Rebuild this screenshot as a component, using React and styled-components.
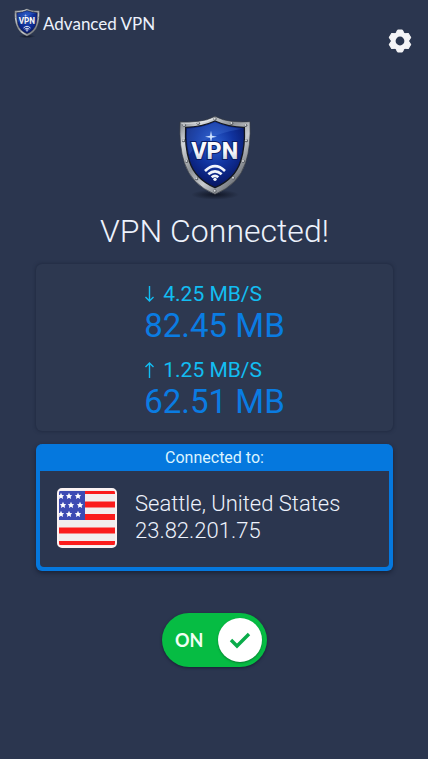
import React, { useId, useState } from "react";
import styled, { createGlobalStyle } from "styled-components";

const rivets = [
  [147, 41],
  [97, 54],
  [197, 54],
  [55, 60],
  [239, 60],
  [53, 106],
  [241, 106],
  [62, 168],
  [232, 168],
  [92, 220],
  [202, 218],
  [147, 257],
];

const Shield = ({ width }) => {
  const id = useId();
  return (
    <ShieldSvg viewBox="36 26 222 262" width={width} role="img" aria-label="VPN shield">
      <defs>
        <linearGradient id={`${id}metal`} x1="0" y1="0" x2="1" y2="1">
          <stop offset="0" stopColor="#6e7277" />
          <stop offset="0.2" stopColor="#d5d8db" />
          <stop offset="0.42" stopColor="#8d9196" />
          <stop offset="0.6" stopColor="#c9ccd0" />
          <stop offset="0.8" stopColor="#777b81" />
          <stop offset="1" stopColor="#a6aaaf" />
        </linearGradient>
        <radialGradient id={`${id}blue`} cx="0.5" cy="0.35" r="0.7">
          <stop offset="0" stopColor="#2b5fd0" />
          <stop offset="0.45" stopColor="#10339f" />
          <stop offset="1" stopColor="#050f56" />
        </radialGradient>
        <linearGradient id={`${id}text`} x1="0" y1="0" x2="0" y2="1">
          <stop offset="0" stopColor="#ffffff" />
          <stop offset="0.55" stopColor="#f4f6fb" />
          <stop offset="1" stopColor="#b4bbcd" />
        </linearGradient>
        <radialGradient id={`${id}shadow`}>
          <stop offset="0" stopColor="#0d1220" stopOpacity="0.9" />
          <stop offset="1" stopColor="#0d1220" stopOpacity="0" />
        </radialGradient>
      </defs>
      <ellipse cx="147" cy="268" rx="72" ry="15" fill={`url(#${id}shadow)`} />
      <path
        d="M147 33Q122 46 96 48Q68 51 42 49Q39 124 55 172Q75 237 147 267Q219 237 239 172Q255 124 252 49Q226 51 198 48Q172 46 147 33Z"
        fill={`url(#${id}metal)`}
        stroke="#34383f"
        strokeWidth="2"
      />
      <path
        d="M147 38Q122 50 96 52Q70 55 46 54"
        fill="none"
        stroke="#eef0f2"
        strokeWidth="2"
      />
      <path
        d="M147 47Q108 65 59 66Q56 124 70 167Q87 221 147 247Q207 221 224 167Q238 124 235 66Q186 65 147 47Z"
        fill={`url(#${id}blue)`}
        stroke="#14171f"
        strokeWidth="4"
      />
      <path
        d="M147 51Q108 69 63 70Q60 110 70 148Q100 92 229 70Q186 69 147 51Z"
        fill="#5e94f0"
        opacity="0.22"
      />
      {rivets.map(([x, y]) => (
        <g key={`${x}-${y}`}>
          <circle cx={x} cy={y} r="5" fill="#5b5f65" />
          <circle cx={x - 1} cy={y - 1} r="3" fill="#dcdee0" />
        </g>
      ))}
      <path
        d="M135 76L138 91L153 94L138 97L135 112L132 97L117 94L132 91Z"
        fill="#cfe3ff"
      />
      <ShieldText
        x="146"
        y="160"
        fill={`url(#${id}text)`}
        stroke="#091b63"
        strokeWidth="6"
      >
        VPN
      </ShieldText>
      <g fill="none" stroke="#f2f5fb" strokeWidth="8">
        <path d="M117 197Q147 168 177 197" />
        <path d="M127 207Q147 189 167 207" />
        <path d="M137 216Q147 207 157 216" />
      </g>
      <circle cx="147" cy="222" r="5" fill="#f2f5fb" />
    </ShieldSvg>
  );
};

const stars = [
  [4, 8], [12, 8], [21, 8],
  [6, 17], [14, 17], [23, 17],
  [4, 26], [12, 26], [21, 26],
];

const Flag = () => (
  <FlagSvg viewBox="0 0 60 60" role="img" aria-label="United States flag">
    <rect x="1" y="1" width="58" height="58" rx="4" fill="#f1eeee" />
    {[3, 13.5, 26, 39.5, 53].map((y, i) => (
      <rect key={y} x="2" y={y} width="56" height={i === 0 ? 3 : i === 4 ? 4 : 6} fill="#fb1c1c" />
    ))}
    <rect x="2" y="3" width="26" height="29" fill="#3d4bb3" />
    {stars.map(([x, y]) => (
      <path
        key={`${x}-${y}`}
        transform={`translate(${x} ${y})`}
        d="M0 -3.2L1 -1L3.2 -0.8L1.6 0.8L2.1 3L0 1.8L-2.1 3L-1.6 0.8L-3.2 -0.8L-1 -1Z"
        fill="#fff"
      />
    ))}
    <rect x="1" y="1" width="58" height="58" rx="4" fill="none" stroke="#fbf3f3" strokeWidth="2" />
  </FlagSvg>
);

const Gear = () => (
  <svg viewBox="-14 -14 28 28" aria-hidden="true">
    <g fill="currentColor">
      {[0, 60, 120].map((angle) => (
        <path
          key={angle}
          transform={`rotate(${angle})`}
          d="M-2.4 -11H2.4L4.4 -7V7L2.4 11H-2.4L-4.4 7V-7Z"
          stroke="currentColor"
          strokeLinejoin="round"
        />
      ))}
      <circle r="9" />
    </g>
    <circle r="4.4" fill="#2b364f" />
  </svg>
);

const Arrow = ({ up }) => (
  <ArrowSvg viewBox="0 0 10 18" aria-hidden="true">
    <path d={up ? "M5 17V2M1 6L5 2L9 6" : "M5 1V16M1 12L5 16L9 12"} />
  </ArrowSvg>
);

const App = () => {
  const [on, setOn] = useState(true);

  return (
    <Page>
      <GlobalStyle />
      <Header>
        <Brand>
          <Shield width={26} />
          Advanced VPN
        </Brand>
        <SettingsButton type="button" aria-label="Settings">
          <Gear />
        </SettingsButton>
      </Header>
      <Main>
        <Shield width={74} />
        <Title>VPN Connected!</Title>
        <Stats>
          <Stat>
            <Speed>
              <Arrow />
              4.25 MB/S
            </Speed>
            <Total>82.45 MB</Total>
          </Stat>
          <Stat>
            <Speed>
              <Arrow up />
              1.25 MB/S
            </Speed>
            <Total>62.51 MB</Total>
          </Stat>
        </Stats>
        <Server>
          <ServerHeading>Connected to:</ServerHeading>
          <ServerBody>
            <Flag />
            <ServerText>
              Seattle, United States
              <br />
              23.82.201.75
            </ServerText>
          </ServerBody>
        </Server>
        <Toggle>
          <ToggleInput
            type="checkbox"
            role="switch"
            checked={on}
            onChange={() => setOn(!on)}
          />
          <ToggleTrack $on={on}>
            <span>{on ? "ON" : "OFF"}</span>
            <Knob>
              <svg viewBox="0 0 22 18" width="22" height="18" aria-hidden="true">
                <path d="M2 9L8 15L20 3" fill="none" stroke="#0aac4a" strokeWidth="3.4" />
              </svg>
            </Knob>
          </ToggleTrack>
        </Toggle>
      </Main>
    </Page>
  );
};

const GlobalStyle = createGlobalStyle`
  * {
    box-sizing: border-box;
  }
  body {
    margin: 0;
    background: #2b364f;
    font-family: Roboto, "Liberation Sans", sans-serif;
  }
`;

const Page = styled.div`
  min-height: 100vh;
  background: #2b364f;
  color: #edf2fc;
`;

const Header = styled.header`
  display: flex;
  justify-content: space-between;
  align-items: flex-start;
  padding: 8px 14px 0;
`;

const Brand = styled.div`
  display: flex;
  align-items: center;
  gap: 3px;
  font-family: Lato, sans-serif;
  font-size: 17px;
  line-height: 31px;
`;

const SettingsButton = styled.button`
  display: flex;
  margin-top: 19px;
  padding: 0;
  border: 0;
  background: none;
  color: #f4f4f6;
  cursor: pointer;
  svg {
    width: 28px;
    height: 28px;
  }
`;

const Main = styled.main`
  display: flex;
  flex-direction: column;
  align-items: center;
  padding: 59px 35px 32px 36px;
`;

const ShieldSvg = styled.svg`
  display: block;
  flex: none;
`;

const ShieldText = styled.text`
  font-family: Roboto, sans-serif;
  font-size: 70px;
  font-weight: 800;
  text-anchor: middle;
  paint-order: stroke;
`;

const Title = styled.h1`
  margin: 11px 0 14px;
  font-size: 32px;
  font-weight: 300;
  line-height: 38px;
`;

const Stats = styled.section`
  display: flex;
  flex-direction: column;
  align-items: center;
  gap: 12px;
  width: 100%;
  padding: 17px 0 10px;
  border-radius: 6px;
  background: #2d3850;
  box-shadow: 0 0 3px 1px #222c43;
`;

const Stat = styled.div`
  display: flex;
  flex-direction: column;
`;

const Speed = styled.div`
  display: flex;
  align-items: center;
  gap: 8px;
  color: #12bdf2;
  font-size: 21px;
  line-height: 26px;
`;

const ArrowSvg = styled.svg`
  width: 11px;
  height: 18px;
  fill: none;
  stroke: currentColor;
  stroke-width: 1.4;
`;

const Total = styled.div`
  color: #0a7ce2;
  font-size: 33px;
  line-height: 38px;
`;

const Server = styled.section`
  width: 100%;
  margin-top: 13px;
  border: 4px solid #0578de;
  border-top: 0;
  border-radius: 6px;
  background: #0578de;
  box-shadow: 0 2px 4px #1a2236;
`;

const ServerHeading = styled.h2`
  margin: 0;
  color: #dcf4ff;
  font-size: 16px;
  font-weight: 400;
  line-height: 26px;
  padding-top: 1px;
  text-align: center;
`;

const ServerBody = styled.div`
  display: flex;
  align-items: center;
  gap: 18px;
  padding: 17px 17px 19px;
  border-radius: 0 0 4px 4px;
  background: #2b364f;
`;

const FlagSvg = styled.svg`
  flex: none;
  width: 60px;
  height: 60px;
`;

const ServerText = styled.p`
  margin: 0;
  padding-bottom: 2px;
  font-size: 22px;
  font-weight: 300;
  line-height: 27px;
`;

const Toggle = styled.label`
  display: block;
  margin-top: 42px;
  cursor: pointer;
`;

const ToggleInput = styled.input`
  position: absolute;
  margin: 0;
  opacity: 0;
`;

const ToggleTrack = styled.span`
  display: flex;
  align-items: center;
  justify-content: space-between;
  width: 105px;
  height: 54px;
  padding: 0 5px 0 13px;
  border-radius: 27px;
  background: ${({ $on }) => ($on ? "#06bc43" : "#6b7488")};
  box-shadow: 0 1px 3px #182135;
  color: #f2fff5;
  font-family: Lato, sans-serif;
  font-size: 18px;
  font-weight: 700;
`;

const Knob = styled.span`
  display: flex;
  align-items: center;
  justify-content: center;
  width: 44px;
  height: 44px;
  border-radius: 50%;
  background: #fff;
  box-shadow: 0 1px 2px #087c30;
`;

export default App;
